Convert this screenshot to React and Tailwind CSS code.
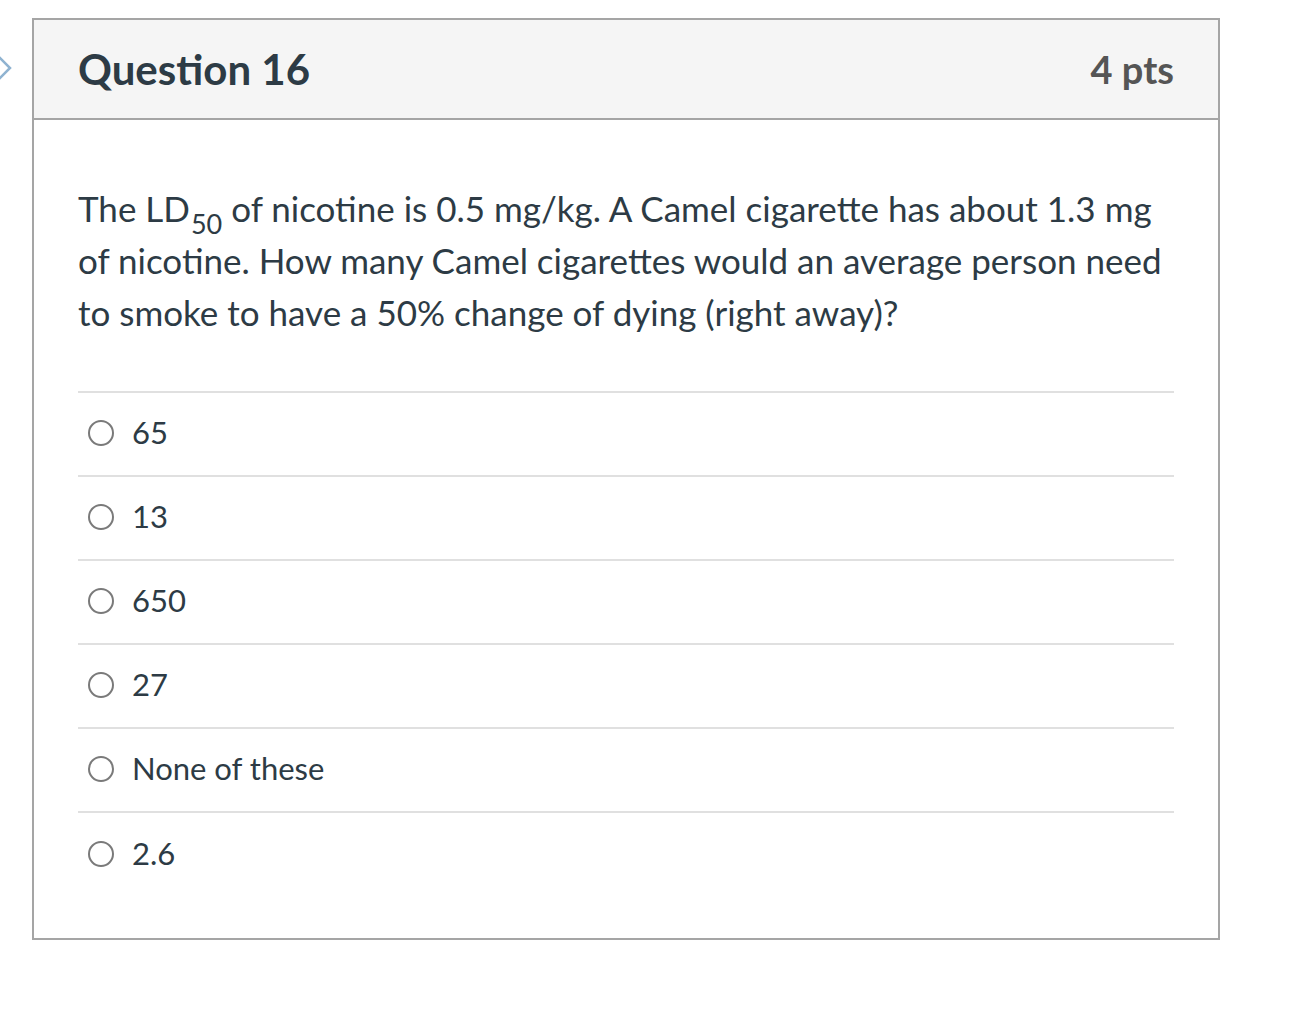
import React from 'react';

const answers = ['65', '13', '650', '27', 'None of these', '2.6'];

function Radio() {
  return (
    <span className="w-[26px] h-[26px] rounded-full border-2 border-[#7a7a7a] bg-white shrink-0" />
  );
}

export default function App() {
  return (
    <div className="min-h-[1014px] bg-white relative font-['Lato','Liberation_Sans',sans-serif] text-[#2d3b45]">
      {/* chevron at the left edge */}
      <svg className="absolute left-[-6px] top-[54px]" width="20" height="28" viewBox="0 0 20 28">
        <path d="M4 2 L16 14 L4 26" fill="none" stroke="#8fb3d1" strokeWidth="2.5" />
      </svg>

      <div className="pt-[18px] pl-[32px] w-[1220px]">
        <div className="border-2 border-[#a5a5a5]">
          {/* header */}
          <div className="h-[100px] bg-[#f5f5f5] border-b-2 border-[#a5a5a5] flex items-center justify-between px-[44px]">
            <h2 className="text-[42px] font-bold">Question 16</h2>
            <span className="text-[38px] font-bold text-[#555555]">4 pts</span>
          </div>

          {/* body */}
          <div className="px-[44px] pt-[62px] pb-[41px]">
            <p className="text-[35px] leading-[52px]">
              The LD<sub className="inline-block ml-[1px] text-[27px] leading-none align-[-5px]">50</sub> of nicotine is 0.5 mg/kg. A Camel cigarette has about 1.3 mg of nicotine. How many Camel cigarettes would an average person need to smoke to have a 50% change of dying (right away)?
            </p>

            <div className="mt-[53px] border-t-2 border-[#e0e0e0]">
              {answers.map((a, i) => (
                <div
                  key={a}
                  className={`flex items-center gap-[18px] pl-[10px] pb-[3px] h-[84px] ${i < answers.length - 1 ? 'border-b-2 border-[#e0e0e0]' : ''}`}
                >
                  <Radio />
                  <span className="text-[31px]">{a}</span>
                </div>
              ))}
            </div>
          </div>
        </div>
      </div>
    </div>
  );
}
